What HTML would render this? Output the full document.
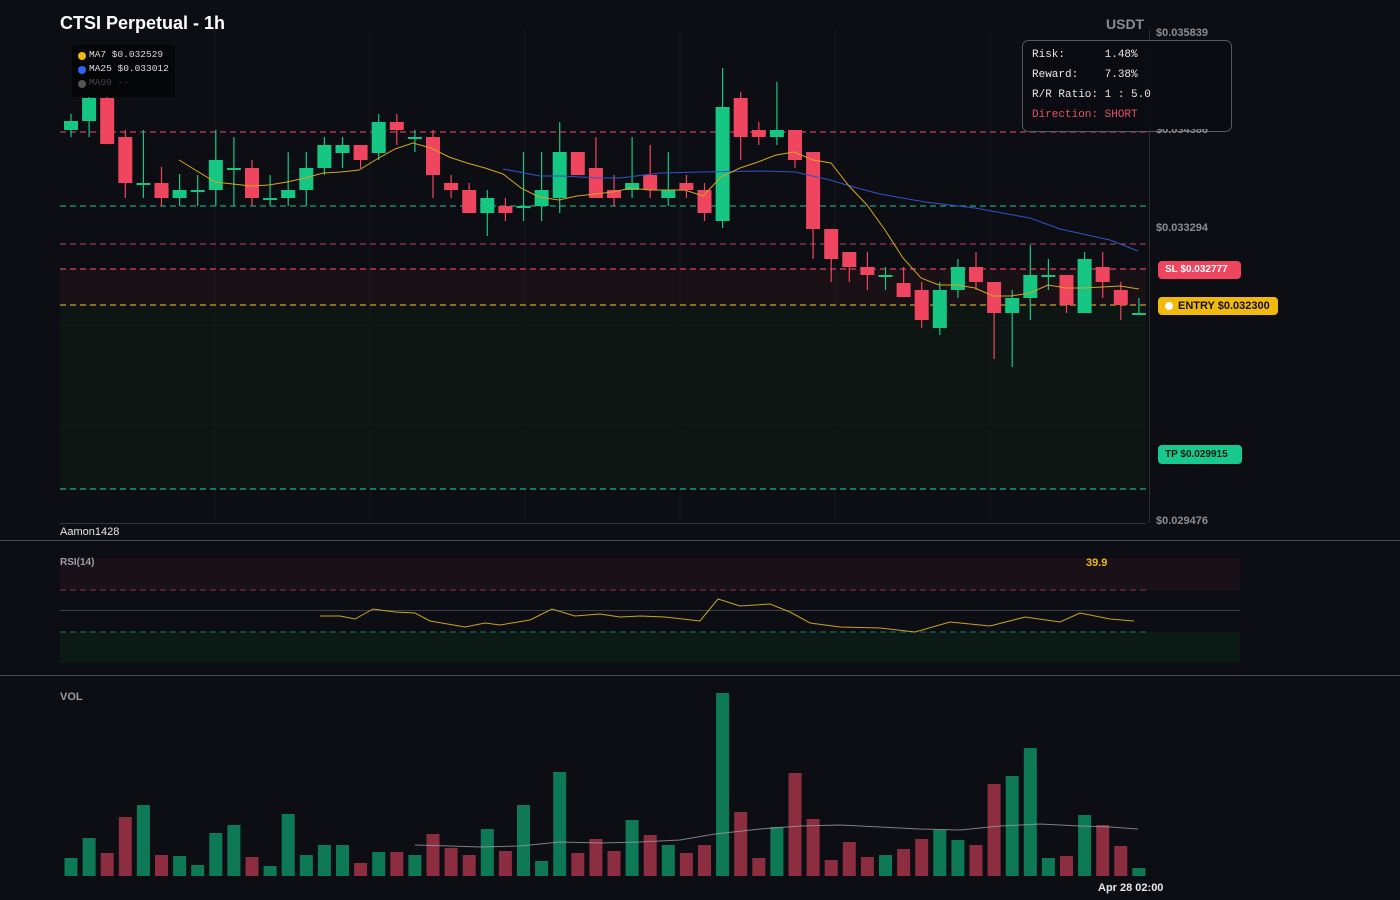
<!DOCTYPE html>
<html><head><meta charset="utf-8"><style>
*{margin:0;padding:0;box-sizing:border-box}
body{width:1400px;height:900px;background:#0d0e13;overflow:hidden;position:relative;font-family:"Liberation Sans",sans-serif}
.t{position:absolute;white-space:nowrap}
.ax{color:#8a8d93;font-size:11px;font-weight:bold}
.mono{font-family:"Liberation Mono",monospace}
svg{position:absolute;left:0;top:0}
</style></head><body>
<svg id="s" width="1400" height="900" xmlns="http://www.w3.org/2000/svg">
<rect x="60" y="269" width="1086" height="36" fill="#1a1117"/>
<rect x="60" y="305" width="1086" height="184" fill="#0d1612"/>
<g stroke="#16181d" stroke-width="1">
<line x1="215" y1="30" x2="215" y2="523"/><line x1="370" y1="30" x2="370" y2="523"/><line x1="525" y1="30" x2="525" y2="523"/><line x1="680" y1="30" x2="680" y2="523"/><line x1="835" y1="30" x2="835" y2="523"/><line x1="990" y1="30" x2="990" y2="523"/>
<line x1="60" y1="326" x2="1146" y2="326"/><line x1="60" y1="425" x2="1146" y2="425"/>
</g>
<line x1="1149.5" y1="30" x2="1149.5" y2="523" stroke="#2a2d33"/>
<line x1="60" y1="523.5" x2="1146" y2="523.5" stroke="#33363c"/>
<g stroke-width="1.2" stroke-dasharray="6 4" fill="none">
<line x1="60" y1="132" x2="1146" y2="132" stroke="#c0405a"/>
<line x1="60" y1="206" x2="1146" y2="206" stroke="#1f9e78"/>
<line x1="60" y1="244" x2="1146" y2="244" stroke="#9a3a50"/>
<line x1="60" y1="269" x2="1146" y2="269" stroke="#d04862"/>
<line x1="60" y1="305" x2="1146" y2="305" stroke="#c9a227"/>
<line x1="60" y1="489" x2="1146" y2="489" stroke="#1fb384"/>
</g>
<g id="candles"></g>
<polyline fill="none" stroke="#2f55c8" stroke-width="1" points="503,169 540,176 560,176 600,178 620,178 660,173 700,172 760,171 795,172 830,180 850,186 880,194 925,202 975,208 1030,218 1060,229 1110,240 1138,251"/>
<polyline fill="none" stroke="#d6a51f" stroke-width="1" points="179,160 215,182 233,184 251,186 269,185 287,182 305,178 323,173 341,172 359,170 377,159 395,149 413,143 431,148 449,157 467,163 485,168 503,174 521,188 539,197 559,200 577,196 595,194 613,192 631,188 649,190 667,190 685,190 703,196 721,177 740,168 758,162 776,155 794,152 813,160 831,163 849,186 867,205 885,230 903,258 921,278 939,285 957,285 975,288 993,296 1011,296 1030,293 1048,285 1066,288 1084,288 1102,287 1120,286 1139,289"/>
<line x1="0" y1="540.5" x2="1400" y2="540.5" stroke="#4a4d53"/>
<line x1="0" y1="675.5" x2="1400" y2="675.5" stroke="#4a4d53"/>
<rect x="60" y="558" width="1180" height="32" fill="#1a1118"/>
<rect x="60" y="632" width="1180" height="31" fill="#0c1a16"/>
<line x1="60" y1="590" x2="1146" y2="590" stroke="#8a3550" stroke-dasharray="6 4"/>
<line x1="60" y1="610.5" x2="1240" y2="610.5" stroke="#3e4147"/>
<line x1="60" y1="632" x2="1146" y2="632" stroke="#1c7a60" stroke-dasharray="6 4"/>
<polyline fill="none" stroke="#c9a227" stroke-width="1" points="320,616 340,616 355,619 373,609 395,612 415,613 430,621 465,627 485,623 500,625 530,620 552,609 575,616 600,614 620,617 640,616 665,617 700,621 718,599 740,606 770,604 790,612 810,623 840,627 880,628 915,632 950,622 990,626 1025,617 1060,622 1080,613 1110,619 1134,621"/>
<g id="vol"></g>
<polyline fill="none" stroke="#9a9da3" stroke-width="1" opacity="0.8" points="415,845 450,846 480,847 520,846 560,842 600,843 640,842 680,840 715,834 760,829 800,826 840,825 880,827 920,829 960,830 1000,826 1040,824 1080,826 1110,827 1138,829"/>
<rect x="1022.5" y="40.5" width="209" height="91" rx="6" fill="#0b0d12" fill-opacity="0.95" stroke="#55585e"/>
<rect x="72" y="45" width="103" height="52" rx="3" fill="#050608"/>
<circle cx="82" cy="56" r="4" fill="#f0b90b"/><circle cx="82" cy="70" r="4" fill="#2f62f0"/><circle cx="82" cy="84" r="4" fill="#555"/>
<rect x="1158" y="261" width="83" height="18" rx="4" fill="#f0455f"/>
<rect x="1158" y="297" width="120" height="18" rx="4" fill="#f0b90b"/>
<circle cx="1169" cy="306" r="4" fill="#fff"/>
<rect x="1158" y="445" width="84" height="19" rx="4" fill="#17c98c"/>
</svg>
<div class="t" style="left:60px;top:13px;color:#fff;font-size:18px;font-weight:bold">CTSI Perpetual - 1h</div>
<div class="t" style="left:1106px;top:16px;color:#8a8d93;font-size:14px;font-weight:bold">USDT</div>
<div class="t mono" style="left:89px;top:48px;color:#ddd;font-size:9.5px;line-height:14px">MA7 $0.032529<br>MA25 $0.033012<br><span style="color:#444">MA99 --</span></div>
<div class="t ax" style="left:1156px;top:27px">$0.035839</div>
<div class="t ax" style="left:1156px;top:124px;clip-path:inset(5px 0 0 0)">$0.034386</div>
<div class="t ax" style="left:1156px;top:222px">$0.033294</div>
<div class="t ax" style="left:1156px;top:515px">$0.029476</div>
<div class="t mono" style="left:1032px;top:45px;color:#e8e8e8;font-size:11px;line-height:20px">Risk:&nbsp;&nbsp;&nbsp;&nbsp;&nbsp;&nbsp;1.48%<br>Reward:&nbsp;&nbsp;&nbsp;&nbsp;7.38%<br>R/R Ratio: 1 : 5.0<br><span style="color:#e8506a">Direction: SHORT</span></div>
<div class="t" style="left:1165px;top:264px;color:#fff;font-size:10px;font-weight:bold">SL $0.032777</div>
<div class="t" style="left:1178px;top:300px;color:#111;font-size:11px;font-weight:bold">ENTRY $0.032300</div>
<div class="t" style="left:1165px;top:449px;color:#0a1a12;font-size:10px;font-weight:bold">TP $0.029915</div>
<div class="t" style="left:60px;top:526px;color:#e8e8e8;font-size:11px">Aamon1428</div>
<div class="t" style="left:60px;top:557px;color:#9a9da3;font-size:10px;font-weight:bold">RSI(14)</div>
<div class="t" style="left:1086px;top:557px;color:#f0b90b;font-size:11px;font-weight:bold">39.9</div>
<div class="t" style="left:60px;top:691px;color:#9a9da3;font-size:11px;font-weight:bold">VOL</div>
<div class="t" style="left:1098px;top:882px;color:#e8e8e8;font-size:11px;font-weight:bold">Apr 28 02:00</div>
<script>
var C=[["g",121,130,114,137],["g",98,121,95,137],["r",98,144,95,144],["r",137,183,130,198],["g",183,185,130,198],["r",183,198,167,206],["g",190,198,174,206],["g",190,192,175,206],["g",160,190,130,206],["g",168,170,137,206],["r",168,198,160,206],["g",198,200,175,206],["g",190,198,152,206],["g",168,190,152,206],["g",145,168,137,175],["g",145,153,137,168],["r",145,160,145,168],["g",122,153,114,160],["r",122,130,114,145],["g",137,139,130,152],["r",137,175,130,198],["r",183,190,175,198],["r",190,213,183,213],["g",198,213,190,236],["r",206,213,198,221],["g",206,208,152,221],["g",190,206,152,221],["g",152,198,122,213],["r",152,175,152,175],["r",168,198,137,198],["r",190,198,175,206],["g",183,190,137,198],["r",175,190,145,198],["g",190,198,152,206],["r",183,190,175,198],["r",190,213,183,221],["g",107,221,68,228],["r",98,137,92,160],["r",130,137,122,145],["g",130,137,82,145],["r",130,160,130,168],["r",152,229,152,259],["r",229,259,229,282],["r",252,267,252,282],["r",267,275,252,290],["g",275,277,267,290],["r",283,297,267,297],["r",290,320,282,328],["g",290,328,282,335],["g",267,290,259,298],["r",267,282,252,290],["r",282,313,282,359],["g",298,313,290,367],["g",275,298,245,320],["g",275,277,259,290],["r",275,305,275,313],["g",259,313,252,313],["r",267,282,252,298],["r",290,305,282,320],["g",313,315,298,315]];
var V=[858,838,853,817,805,855,856,865,833,825,857,866,814,855,845,845,863,852,852,855,834,848,855,829,851,805,861,772,853,839,851,820,835,845,853,845,693,812,858,827,773,819,860,842,857,855,849,839,830,840,845,784,776,748,858,856,815,825,846,868];
var ns="http://www.w3.org/2000/svg",cg=document.getElementById("candles"),vg=document.getElementById("vol");
function el(p,t,a){var e=document.createElementNS(ns,t);for(var k in a)e.setAttribute(k,a[k]);p.appendChild(e);}
C.forEach(function(c,i){var x=71+18.1*i,col=c[0]=="g"?"#16c784":"#f0455f";
el(cg,"line",{x1:x,x2:x,y1:c[3],y2:c[4],stroke:col,"stroke-width":1.2});
el(cg,"rect",{x:x-7,y:c[1],width:14,height:Math.max(2,c[2]-c[1]),fill:col});
var vc=C[i][0]=="g"?"#0e7a55":"#8c2d40";
el(vg,"rect",{x:x-6.5,y:V[i],width:13,height:876-V[i],fill:vc});});
</script>
</body></html>
